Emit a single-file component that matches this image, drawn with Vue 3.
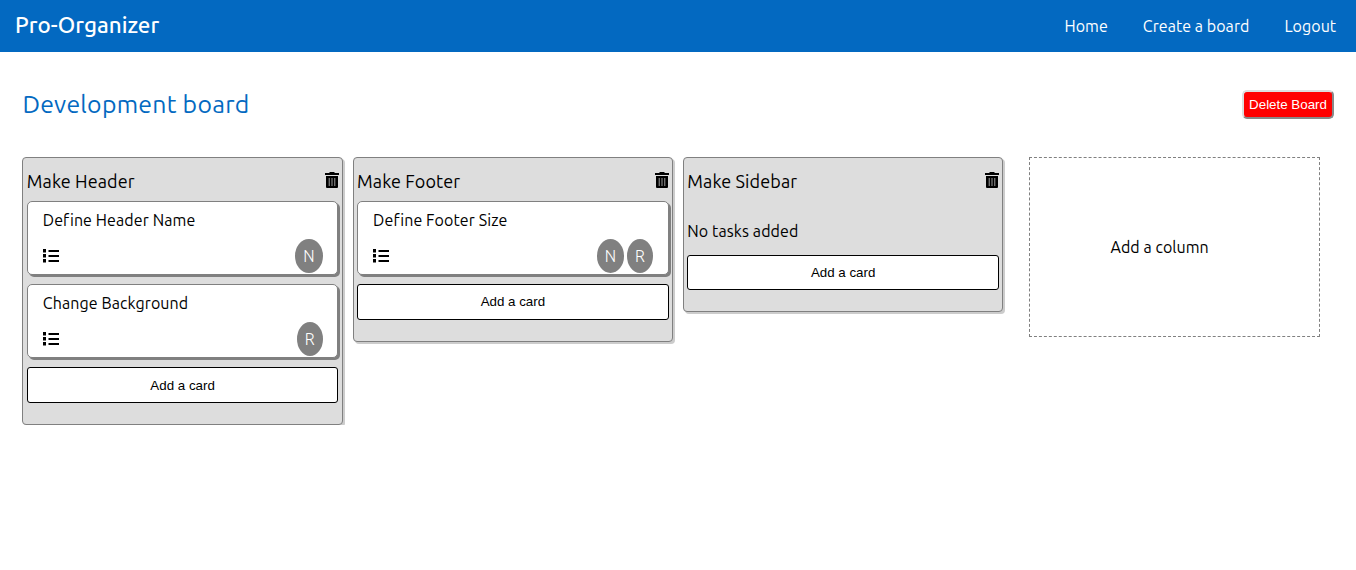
<script setup>
const links = ['Home', 'Create a board', 'Logout']
const columns = [
  {
    title: 'Make Header',
    cards: [
      { name: 'Define Header Name', members: ['N'] },
      { name: 'Change Background', members: ['R'] },
    ],
  },
  { title: 'Make Footer', cards: [{ name: 'Define Footer Size', members: ['N', 'R'] }] },
  { title: 'Make Sidebar', cards: [] },
]
</script>

<template>
  <div class="page">
    <header class="navbar">
      <div class="brand">Pro-Organizer</div>
      <nav>
        <a v-for="link in links" :key="link">{{ link }}</a>
      </nav>
    </header>

    <div class="board-head">
      <h1>Development board</h1>
      <button class="delete">Delete Board</button>
    </div>

    <main class="board">
      <section v-for="column in columns" :key="column.title" class="column">
        <div class="column-head">
          <h2>{{ column.title }}</h2>
          <svg class="trash" width="14" height="16" viewBox="0 0 14 16">
            <path
              fill-rule="evenodd"
              d="M0 1h4l1-1h4l1 1h4v2H0zM1 4h12v11a1 1 0 0 1-1 1H2a1 1 0 0 1-1-1zM3.800 6v8h0.700V6zM6.650 6v8h0.700V6zM9.500 6v8h0.700V6z"
            />
          </svg>
        </div>

        <article v-for="card in column.cards" :key="card.name" class="card">
          <div class="card-name">{{ card.name }}</div>
          <div class="card-foot">
            <svg class="list" width="16" height="14" viewBox="0 0 16 14">
              <path d="M0 0h3v3.400H0zM0 5h3v3.400H0zM0 10h3v3.400H0zM5.500 1H16v2.100H5.500zM5.500 6H16v2.100H5.500zM5.500 11H16v2.100H5.500z" />
            </svg>
            <div class="members">
              <span v-for="m in card.members" :key="m" class="member">{{ m }}</span>
            </div>
          </div>
        </article>

        <p v-if="!column.cards.length" class="empty">No tasks added</p>
        <button class="add-card">Add a card</button>
      </section>

      <div class="add-column">Add a column</div>
    </main>
  </div>
</template>

<style>
body {
  background: #fff;
}
</style>

<style scoped>
.page {
  font-family: Ubuntu, "Noto Sans", sans-serif;
  font-size: 16px;
  line-height: 18px;
  letter-spacing: 0.1px;
  color: #000;
}
.navbar {
  height: 52px;
  box-sizing: border-box;
  padding: 0 19.8px 0 15px;
  display: flex;
  justify-content: space-between;
  align-items: center;
  background: #0369c1;
  color: #fff;
}
.brand {
  margin-top: -2px;
  font-size: 22.4px;
  font-weight: 500;
  line-height: 26px;
  letter-spacing: 0;
}
nav {
  display: flex;
  gap: 35px;
  letter-spacing: 0.05px;
}
.board-head {
  height: 105px;
  box-sizing: border-box;
  padding: 0 22px 0 22.4px;
  display: flex;
  align-items: center;
  justify-content: space-between;
}
h1 {
  margin: -1px 0 0;
  font-size: 24.8px;
  font-weight: 400;
  line-height: 30px;
  letter-spacing: 0.26px;
  color: #0369c1;
}
.delete {
  box-sizing: border-box;
  width: 92px;
  height: 29px;
  padding: 0;
  border: 2px outset #ddd;
  border-radius: 5px;
  background: red;
  color: #fff;
  font: 13.333px "Liberation Sans", Arial, sans-serif;
}
.board {
  display: flex;
  align-items: flex-start;
  padding-left: 22.4px;
  gap: 9.9px;
}
.column {
  box-sizing: border-box;
  width: 320.4px;
  padding: 12px 3.4px 21px;
  border: 1px solid gray;
  border-radius: 4px;
  background: #ddd;
  box-shadow: 2px 2px #ccc;
}
.column-head {
  display: flex;
  justify-content: space-between;
  height: 31px;
}
h2 {
  margin: 0;
  font-size: 18px;
  font-weight: 400;
  line-height: 22px;
}
.trash {
  margin: 2px -0.3px 0 0;
}
.card {
  box-sizing: border-box;
  height: 74.2px;
  margin-bottom: 9px;
  padding: 9px 14.7px 0 15px;
  border: 1px solid gray;
  border-radius: 5px;
  background: #fff;
  box-shadow: 2px 2px gray;
}
.card-foot {
  display: flex;
  justify-content: space-between;
  margin-top: 10px;
}
.list {
  margin-top: 10px;
}
.members {
  display: flex;
  gap: 2.8px;
}
.member {
  padding: 8px;
  border-radius: 50%;
  background: gray;
  color: #fff;
  font-weight: 300;
}
.add-card {
  display: block;
  box-sizing: border-box;
  width: 100%;
  height: 35.4px;
  padding: 0;
  border: 1px solid #000;
  border-radius: 3px;
  background: #fff;
  color: #000;
  font: 13.333px "Liberation Sans", Arial, sans-serif;
}
.empty {
  margin: 21px 0 15px;
}
.add-column {
  box-sizing: border-box;
  width: 291px;
  height: 180px;
  margin-left: 15.9px;
  padding: 80px 0 0 80.4px;
  border: 1px dashed gray;
  letter-spacing: 0.05px;
}
</style>
